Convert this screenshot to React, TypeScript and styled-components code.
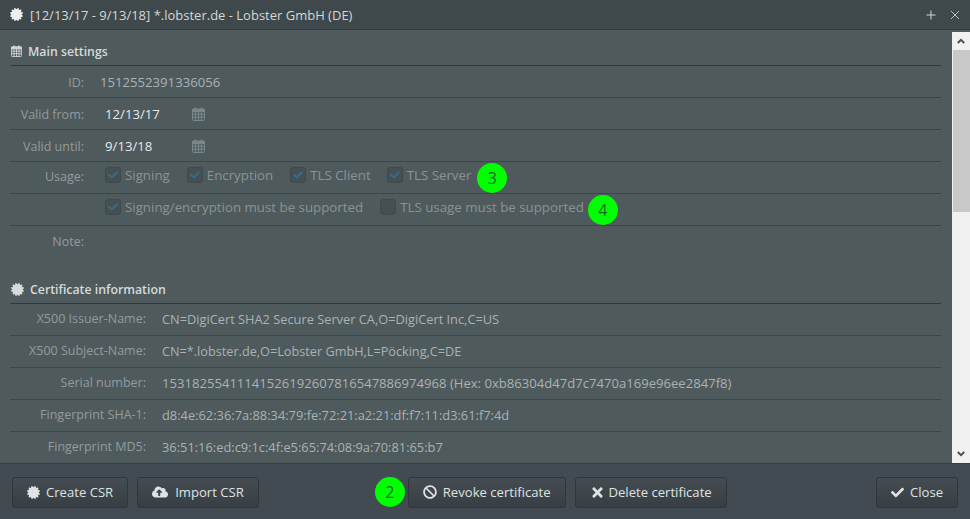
import * as React from "react";
import styled, { createGlobalStyle } from "styled-components";
import {
  FaCertificate,
  FaCloudUploadAlt,
  FaBan,
  FaTimes,
  FaCheck,
} from "react-icons/fa";

const GlobalStyle = createGlobalStyle`
  html, body {
    margin: 0;
    padding: 0;
    height: 519px;
    overflow: hidden;
    background: #4f5a5d;
    font-family: "Open Sans", "Liberation Sans", sans-serif;
    font-size: 13px;
  }
`;

const Window = styled.div`
  width: 970px;
  height: 519px;
  display: flex;
  flex-direction: column;
  overflow: hidden;
`;

const TitleBar = styled.div`
  height: 29px;
  flex: none;
  display: flex;
  align-items: center;
  padding: 0 3px 0 10px;
  background: #3f484b;
  border-bottom: 1px solid #343a3d;
  color: #d3d8d9;
`;

const TitleText = styled.span`
  margin-left: 7px;
  flex: 1;
`;

const TitleButton = styled.span`
  width: 24px;
  height: 18px;
  display: flex;
  align-items: center;
  justify-content: center;
`;

const Middle = styled.div`
  height: 433px;
  flex: none;
  display: flex;
  background: #4f5a5d;
  padding-top: 2px;
  box-sizing: border-box;
`;

const Scroller = styled.div`
  flex: 1;
  padding: 0 11px 0 10px;
  overflow: hidden;
`;

const Heading = styled.div<{ $gap?: number; $top: number }>`
  height: 34px;
  margin-top: ${props => props.$gap || 0}px;
  display: flex;
  align-items: center;
  padding: ${props => props.$top}px 0 0 1px;
  box-sizing: border-box;
  gap: 6px;
  font-weight: 600;
  font-size: 12.3px;
  color: #d5dadb;
  border-bottom: 1px solid #30373a;
`;

const Row = styled.div<{ $low?: boolean }>`
  height: 32px;
  box-sizing: border-box;
  display: flex;
  align-items: center;
  padding: ${props => (props.$low ? "1px 0 0" : "0 0 2px")};
  border-bottom: 1px solid #3e4649;
  color: #aab2b4;
  font-size: 12.5px;
`;

const NoteRow = styled(Row)`
  border-bottom: none;
`;

const Label = styled.div<{ $width: number }>`
  width: ${props => props.$width}px;
  flex: none;
  text-align: right;
  color: #929b9d;
`;

const Value = styled.div<{ $size: number }>`
  margin-left: 16px;
  white-space: nowrap;
  font-size: ${props => props.$size}px;
`;

const DateValue = styled.div`
  margin-left: 21px;
  width: 87px;
  font-size: 13.2px;
  color: #e6e9ea;
`;

const CheckGroup = styled.div`
  margin: 0 0 4px 21px;
  display: flex;
  align-items: center;
  font-size: 13.3px;
`;

const CheckItem = styled.label<{ $gap: number }>`
  display: flex;
  align-items: center;
  margin-right: ${props => props.$gap}px;
  color: #8a9395;
`;

const CheckBox = styled.span`
  width: 14px;
  height: 14px;
  margin-right: 4px;
  flex: none;
  display: flex;
  align-items: center;
  justify-content: center;
  background: #465053;
  border: 1px solid #40484b;
  border-radius: 3px;
  color: #2f6f8c;
`;

const Badge = styled.span`
  width: 30px;
  height: 30px;
  flex: none;
  display: flex;
  align-items: center;
  justify-content: center;
  border-radius: 50%;
  background: #00ff00;
  color: #1a6b24;
  font-size: 16px;
`;

const RowBadge = styled(Badge)`
  margin-top: 6px;
`;

const FooterBadge = styled(Badge)`
  margin-left: 116px;
`;

const Scrollbar = styled.div`
  width: 18px;
  flex: none;
  display: flex;
  flex-direction: column;
  background: #f1f1f1;
`;

const ScrollArrow = styled.div`
  height: 18px;
  flex: none;
  display: flex;
  align-items: center;
  justify-content: center;
`;

const ScrollThumb = styled.div`
  height: 162px;
  flex: none;
  margin-left: 1px;
  background: #c9c9c9;
`;

const ScrollTrack = styled.div`
  flex: 1;
`;

const Footer = styled.div`
  flex: 1;
  display: flex;
  align-items: center;
  padding: 1px 12px 0;
  background: #424b51;
  border-top: 1px solid #383f43;
  font-size: 13.1px;
`;

const Button = styled.button<{ $left?: number; $gap?: number }>`
  height: 31px;
  margin-left: ${props => props.$left || 0}px;
  padding: 0 14px;
  display: flex;
  align-items: center;
  gap: ${props => props.$gap || 6}px;
  font: inherit;
  color: #dfe3e4;
  background: linear-gradient(#454d52, #383f44);
  border: 1px solid #30363a;
  border-radius: 3px;
`;

const CloseButton = styled(Button)`
  margin-left: auto;
`;

const usageItems = [
  { text: "Signing", gap: 17 },
  { text: "Encryption", gap: 17 },
  { text: "TLS Client", gap: 16 },
  { text: "TLS Server", gap: 6 },
];

const infoRows = [
  { label: "X500 Issuer-Name:", value: "CN=DigiCert SHA2 Secure Server CA,O=DigiCert Inc,C=US", size: 12.8 },
  { label: "X500 Subject-Name:", value: "CN=*.lobster.de,O=Lobster GmbH,L=Pöcking,C=DE", size: 12.7 },
  { label: "Serial number:", value: "15318255411141526192607816547886974968 (Hex: 0xb86304d47d7c7470a169e96ee2847f8)", size: 13.1 },
  { label: "Fingerprint SHA-1:", value: "d8:4e:62:36:7a:88:34:79:fe:72:21:a2:21:df:f7:11:d3:61:f7:4d", size: 12.85 },
  { label: "Fingerprint MD5:", value: "36:51:16:ed:c9:1c:4f:e5:65:74:08:9a:70:81:65:b7", size: 12.85 },
];

const Check = ({ on = true }: { on?: boolean }) => (
  <CheckBox>{on && <FaCheck size={10} />}</CheckBox>
);

// old style calendar with the grid of days, the icon packages only have the newer one
const CalendarIcon = ({ w, h, color }: { w: number; h: number; color: string }) => (
  <svg width={w} height={h} viewBox="0 0 13 14" fill="none" stroke={color}>
    <path d="M3.5 0.5v3M9.5 0.5v3" strokeWidth="1.6" />
    <rect x="0.5" y="2" width="12" height="11.5" rx="1" />
    <path d="M0.5 2.5h12v2h-12z" fill={color} strokeWidth="1" />
    <path d="M0.5 7.2h12M0.5 10.2h12M3.5 4.5v9M6.5 4.5v9M9.5 4.5v9" strokeWidth="1" />
  </svg>
);

const ArrowIcon = ({ up }: { up?: boolean }) => (
  <svg width="8" height="6" viewBox="0 0 8 6">
    <path
      d={up ? "M0.8 5L4 1.8L7.2 5" : "M0.8 1L4 4.2L7.2 1"}
      stroke="#505050"
      strokeWidth="2"
      fill="none"
    />
  </svg>
);

export default function App() {
  return (
    <Window>
      <GlobalStyle />
      <TitleBar>
        <FaCertificate size={13} color="#eef0f0" />
        <TitleText>[12/13/17 - 9/13/18] *.lobster.de - Lobster GmbH (DE)</TitleText>
        <TitleButton>
          <svg width="10" height="10" viewBox="0 0 10 10">
            <path d="M5 0.5v9M0.5 5h9" stroke="#c9d6e6" strokeWidth="1" fill="none" />
          </svg>
        </TitleButton>
        <TitleButton>
          <svg width="10" height="10" viewBox="0 0 10 10">
            <path d="M1 1l8 8M9 1l-8 8" stroke="#b9c2c4" strokeWidth="1" fill="none" />
          </svg>
        </TitleButton>
      </TitleBar>
      <Middle>
        <Scroller>
          <Heading $top={5}>
            <CalendarIcon w={11} h={12} color="#d5dadb" />
            Main settings
          </Heading>
          <Row $low>
            <Label $width={74}>ID:</Label>
            <Value $size={13.15}>1512552391336056</Value>
          </Row>
          <Row $low>
            <Label $width={74}>Valid from:</Label>
            <DateValue>12/13/17</DateValue>
            <CalendarIcon w={13} h={14} color="#7a878b" />
          </Row>
          <Row $low>
            <Label $width={74}>Valid until:</Label>
            <DateValue>9/13/18</DateValue>
            <CalendarIcon w={13} h={14} color="#7a878b" />
          </Row>
          <Row>
            <Label $width={74}>Usage:</Label>
            <CheckGroup>
              {usageItems.map(item => (
                <CheckItem key={item.text} $gap={item.gap}>
                  <Check />
                  {item.text}
                </CheckItem>
              ))}
              <RowBadge>3</RowBadge>
            </CheckGroup>
          </Row>
          <Row>
            <Label $width={74} />
            <CheckGroup>
              <CheckItem $gap={17}>
                <Check />
                Signing/encryption must be supported
              </CheckItem>
              <CheckItem $gap={4}>
                <Check on={false} />
                TLS usage must be supported
              </CheckItem>
              <RowBadge>4</RowBadge>
            </CheckGroup>
          </Row>
          <NoteRow>
            <Label $width={74}>Note:</Label>
          </NoteRow>
          <Heading $gap={12} $top={5}>
            <FaCertificate size={13} />
            Certificate information
          </Heading>
          {infoRows.map(row => (
            <Row key={row.label}>
              <Label $width={136}>{row.label}</Label>
              <Value $size={row.size}>{row.value}</Value>
            </Row>
          ))}
        </Scroller>
        <Scrollbar>
          <ScrollArrow>
            <ArrowIcon up />
          </ScrollArrow>
          <ScrollThumb />
          <ScrollTrack />
          <ScrollArrow>
            <ArrowIcon />
          </ScrollArrow>
        </Scrollbar>
      </Middle>
      <Footer>
        <Button>
          <FaCertificate size={13} />
          Create CSR
        </Button>
        <Button $left={9} $gap={7}>
          <FaCloudUploadAlt size={16} />
          Import CSR
        </Button>
        <FooterBadge>2</FooterBadge>
        <Button $left={3}>
          <FaBan size={14} />
          Revoke certificate
        </Button>
        <Button $left={9} $gap={4}>
          <FaTimes size={15} />
          Delete certificate
        </Button>
        <CloseButton>
          <FaCheck size={13} />
          Close
        </CloseButton>
      </Footer>
    </Window>
  );
}
